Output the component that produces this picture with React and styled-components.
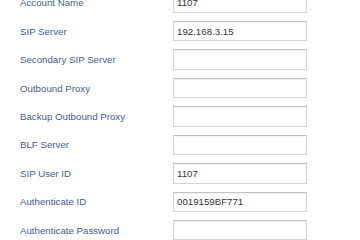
import styled, { createGlobalStyle } from "styled-components";

const GlobalStyle = createGlobalStyle`
  html, body {
    margin: 0;
    padding: 0;
    background: #ffffff;
    overflow: hidden;
  }
`

const fields = [
  { label: 'Account Name', value: '1107' },
  { label: 'SIP Server', value: '192.168.3.15' },
  { label: 'Secondary SIP Server', value: '' },
  { label: 'Outbound Proxy', value: '' },
  { label: 'Backup Outbound Proxy', value: '' },
  { label: 'BLF Server', value: '' },
  { label: 'SIP User ID', value: '1107' },
  { label: 'Authenticate ID', value: '0019159BF771' },
  { label: 'Authenticate Password', value: '', type: 'password' },
]

const App = () => {
  return (
    <>
      <GlobalStyle />
      <Form>
        {fields.map((f) => (
          <Row key={f.label}>
            <Label>{f.label}</Label>
            <Input type={f.type || 'text'} defaultValue={f.value} readOnly />
          </Row>
        ))}
      </Form>
    </>
  )
}

export default App

const Form = styled.div`
  display: flex;
  flex-direction: column;
  margin-top: -11.4px;
  font-family: "Liberation Sans", Arial, sans-serif;
`

const Row = styled.div`
  display: grid;
  grid-template-columns: 153px 134px;
  align-items: center;
  height: 28.43px;
  padding-left: 20px;
`

const Label = styled.label`
  font-size: 9.7px;
  color: #3f5e98;
  white-space: nowrap;
`

const Input = styled.input`
  box-sizing: border-box;
  width: 134px;
  height: 20.5px;
  margin: 0;
  padding: 0 3px;
  border: 1px solid #d4d4d4;
  border-top-color: #c2c2c2;
  border-radius: 0;
  box-shadow: inset 0 1px 1px rgba(0, 0, 0, 0.06);
  background: #ffffff;
  font-family: "Liberation Sans", Arial, sans-serif;
  font-size: 9.7px;
  color: #333333;
  outline: none;
`
